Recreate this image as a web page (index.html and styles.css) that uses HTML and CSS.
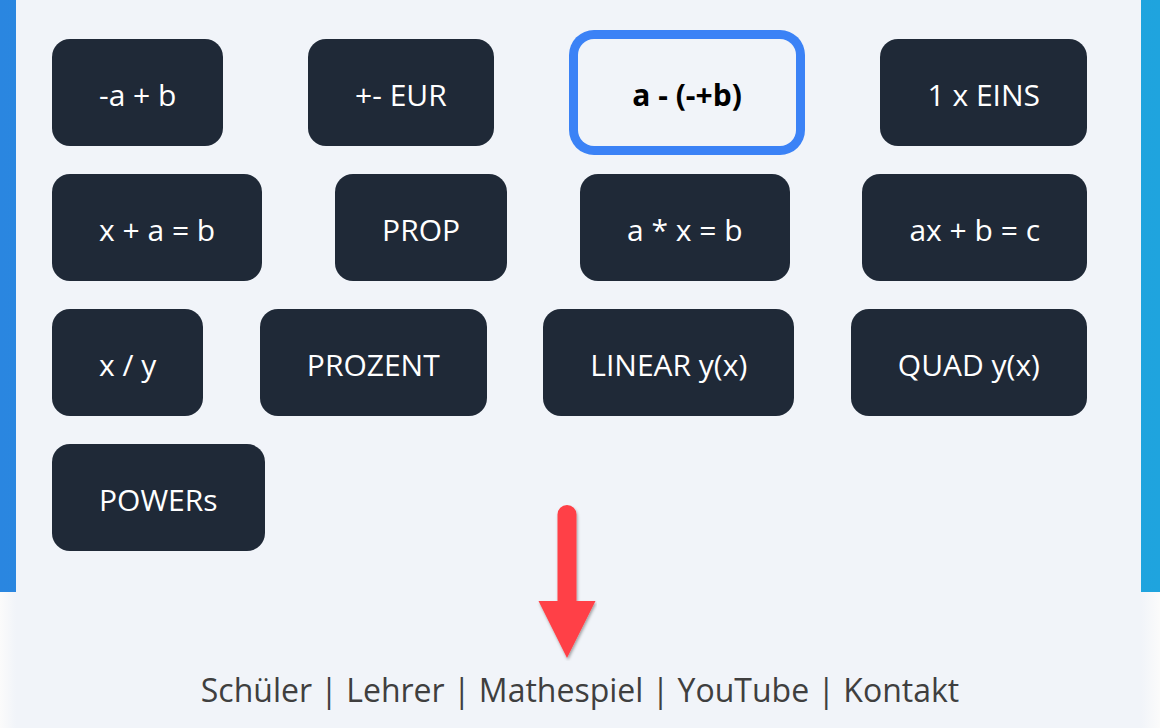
FILE: index.html
```html
<!DOCTYPE html>
<html lang="de">
<head>
<meta charset="utf-8">
<title>Mathe</title>
<link rel="stylesheet" href="styles.css">
</head>
<body>
<div class="frame">
  <main class="panel">
    <div class="row">
      <button class="btn">-a + b</button>
      <button class="btn">+- EUR</button>
      <button class="btn btn-active">a - (-+b)</button>
      <button class="btn">1 x EINS</button>
    </div>
    <div class="row">
      <button class="btn">x + a = b</button>
      <button class="btn">PROP</button>
      <button class="btn">a * x = b</button>
      <button class="btn">ax + b = c</button>
    </div>
    <div class="row">
      <button class="btn">x / y</button>
      <button class="btn">PROZENT</button>
      <button class="btn">LINEAR y(x)</button>
      <button class="btn">QUAD y(x)</button>
    </div>
    <div class="row">
      <button class="btn">POWERs</button>
    </div>
  </main>
</div>
<footer class="footer">
  <p class="links">Schüler | Lehrer | Mathespiel | YouTube | Kontakt</p>
</footer>
<svg class="arrow" width="60" height="156" viewBox="0 0 60 156" aria-hidden="true">
  <defs>
    <filter id="sh" x="-30%" y="-10%" width="160%" height="130%">
      <feDropShadow dx="1" dy="2" stdDeviation="1.5" flood-color="#000" flood-opacity="0.35"/>
    </filter>
  </defs>
  <g filter="url(#sh)">
    <path d="M20.5 97 V9.5 A9.5 9.5 0 0 1 39.5 9.5 V97 Z" fill="#ff4146"/>
    <path d="M1.5 96 H58.5 L30 153 Z" fill="#ff4146"/>
  </g>
</svg>
</body>
</html>
```

FILE: styles.css
```css
* { box-sizing: border-box; }

html, body {
  margin: 0;
  padding: 0;
}

body {
  background: #f1f4f9;
  font-family: "Open Sans", "Noto Sans", "DejaVu Sans", sans-serif;
  position: relative;
  width: 1160px;
  min-height: 728px;
  overflow: hidden;
}

.frame {
  background: linear-gradient(90deg, #2a86e0 0%, #1fa4de 100%);
  padding: 0 19px 0 16px;
}

.panel {
  background: #f1f4f9;
  padding: 39px 54px 41px 36px;
  display: flex;
  flex-direction: column;
  gap: 28px;
}

.row {
  display: flex;
  justify-content: space-between;
  align-items: center;
}

.btn {
  height: 107px;
  padding: 4px 47px 0;
  border: none;
  border-radius: 18px;
  background: #1f2937;
  color: #ffffff;
  font-family: inherit;
  font-size: 30px;
  font-weight: 400;
  line-height: 1;
  white-space: nowrap;
  cursor: pointer;
}

.btn-active {
  padding: 4px 54px 0;
  background: #f1f4f9;
  color: #000000;
  font-weight: 700;
  border-radius: 16px;
  box-shadow: 0 0 0 9px #3b82f6;
}

.footer {
  height: 136px;
  background: linear-gradient(90deg, #fbfbfb 0, #f1f4f9 16px, #f1f4f9 calc(100% - 19px), #fbfbfb 100%);
  padding-top: 78px;
}

.links {
  margin: 0;
  text-align: center;
  font-size: 32px;
  line-height: 40px;
  color: #3f3f3f;
}

.arrow {
  position: absolute;
  left: 537px;
  top: 505px;
}
```
